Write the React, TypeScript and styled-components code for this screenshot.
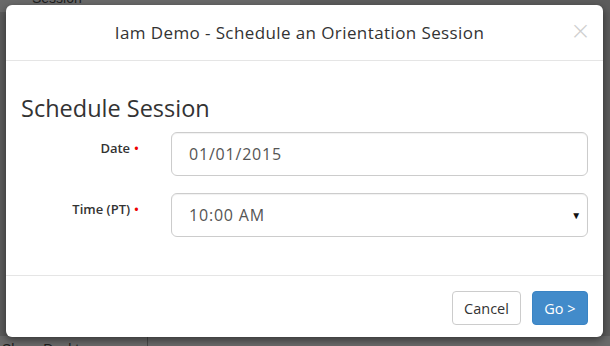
import React from "react";
import styled, { createGlobalStyle } from "styled-components";

const Global = createGlobalStyle`
  html, body { margin: 0; padding: 0; }
  body { width: 610px; height: 346px; overflow: hidden; background: #5e5e5e; font-family: "Open Sans", "Liberation Sans", sans-serif; }
`;

const Backdrop = styled.div`
  position: relative;
  width: 610px;
  height: 346px;
  display: flex;
  flex-direction: column;
  justify-content: space-between;
  background: #5c5c5c;
`;

const BgTop = styled.div`
  height: 12px;
  display: flex;
  background: linear-gradient(90deg, #6a6a6a 0 300px, #5d5d5d 300px);
`;

const BgText = styled.span`
  font-family: "Liberation Sans", sans-serif;
  font-size: 14px;
  color: #1e1e1e;
  line-height: 14px;
  white-space: nowrap;
`;

const BgTopText = styled(BgText)`
  margin: -9px 0 0 32px;
`;

const BgBottom = styled.div`
  height: 10px;
  display: flex;
  background: #6b6b6b;
`;

const BgBottomCell = styled.div`
  width: 145px;
  border-right: 1px solid #4a4a4a;
  padding: 1px 0 0 2px;
  overflow: hidden;
`;

const Modal = styled.div`
  position: absolute;
  left: 6px;
  top: 5px;
  width: 597px;
  height: 332px;
  background: #fff;
  border-radius: 6px;
  box-shadow: 0 3px 9px rgba(0, 0, 0, 0.5);
  display: flex;
  flex-direction: column;
`;

const Header = styled.div`
  position: relative;
  height: 55px;
  border-bottom: 1px solid #e5e5e5;
  display: flex;
  align-items: center;
  justify-content: center;
  padding-right: 10px;
`;

const Title = styled.h4`
  margin: 0;
  font-size: 17px;
  font-weight: 400;
  color: #333;
  letter-spacing: 0.4px;
`;

const Close = styled.button`
  position: absolute;
  right: 12px;
  top: 12px;
  border: 0;
  background: none;
  padding: 0;
  font-family: "DejaVu Sans", sans-serif;
  font-weight: 300;
  font-size: 25px;
  line-height: 28px;
  color: #cfcfcf;
`;

const Body = styled.div`
  flex: 1;
  padding: 32px 15px 0;
`;

const Heading = styled.h3`
  margin: 0 0 9px;
  font-size: 23.5px;
  line-height: 30px;
  font-weight: 400;
  color: #333;
`;

const Row = styled.div`
  display: grid;
  grid-template-columns: 118px 1fr;
  column-gap: 32px;
  margin-bottom: 17px;
`;

const Label = styled.label`
  text-align: right;
  padding-top: 7px;
  font-size: 13px;
  font-weight: 600;
  color: #333;
`;

const Req = styled.span`
  color: #e00;
  font-size: 13px;
  margin-left: 4px;
`;

const Field = styled.div`
  height: 44px;
  box-sizing: border-box;
  border: 1px solid #ccc;
  border-radius: 6px;
  box-shadow: inset 0 1px 1px rgba(0, 0, 0, 0.06);
  display: flex;
  align-items: center;
  justify-content: space-between;
  padding: 0 5px 0 17px;
  font-size: 16px;
  letter-spacing: 0.8px;
  color: #555;
`;

const Caret = styled.span`
  font-size: 10px;
  color: #111;
`;

const Footer = styled.div`
  height: 62px;
  border-top: 1px solid #e5e5e5;
  box-sizing: border-box;
  display: flex;
  justify-content: flex-end;
  align-items: flex-start;
  gap: 11px;
  padding: 15px 15px 0;
`;

const Button = styled.button<{ $primary?: boolean }>`
  height: 34px;
  box-sizing: border-box;
  border-radius: 4px;
  border: 1px solid ${(p) => (p.$primary ? "#3a84c4" : "#ccc")};
  background: ${(p) => (p.$primary ? "#428bca" : "#fff")};
  color: ${(p) => (p.$primary ? "#fff" : "#333")};
  font-family: "Open Sans", sans-serif;
  font-size: 14.5px;
  padding: 0;
  white-space: nowrap;
  width: ${(p) => (p.$primary ? "56px" : "69px")};
`;

export default function App() {
  return (
    <>
      <Global />
      <Backdrop>
        <BgTop>
          <BgTopText>Session</BgTopText>
        </BgTop>
        <BgBottom>
          <BgBottomCell>
            <BgText>Share Desktop</BgText>
          </BgBottomCell>
        </BgBottom>
        <Modal>
          <Header>
            <Title>Iam Demo - Schedule an Orientation Session</Title>
            <Close>×</Close>
          </Header>
          <Body>
            <Heading>Schedule Session</Heading>
            <Row>
              <Label>
                Date<Req>•</Req>
              </Label>
              <Field>01/01/2015</Field>
            </Row>
            <Row>
              <Label>
                Time (PT)<Req>•</Req>
              </Label>
              <Field>
                10:00 AM<Caret>▼</Caret>
              </Field>
            </Row>
          </Body>
          <Footer>
            <Button>Cancel</Button>
            <Button $primary>Go &gt;</Button>
          </Footer>
        </Modal>
      </Backdrop>
    </>
  );
}
